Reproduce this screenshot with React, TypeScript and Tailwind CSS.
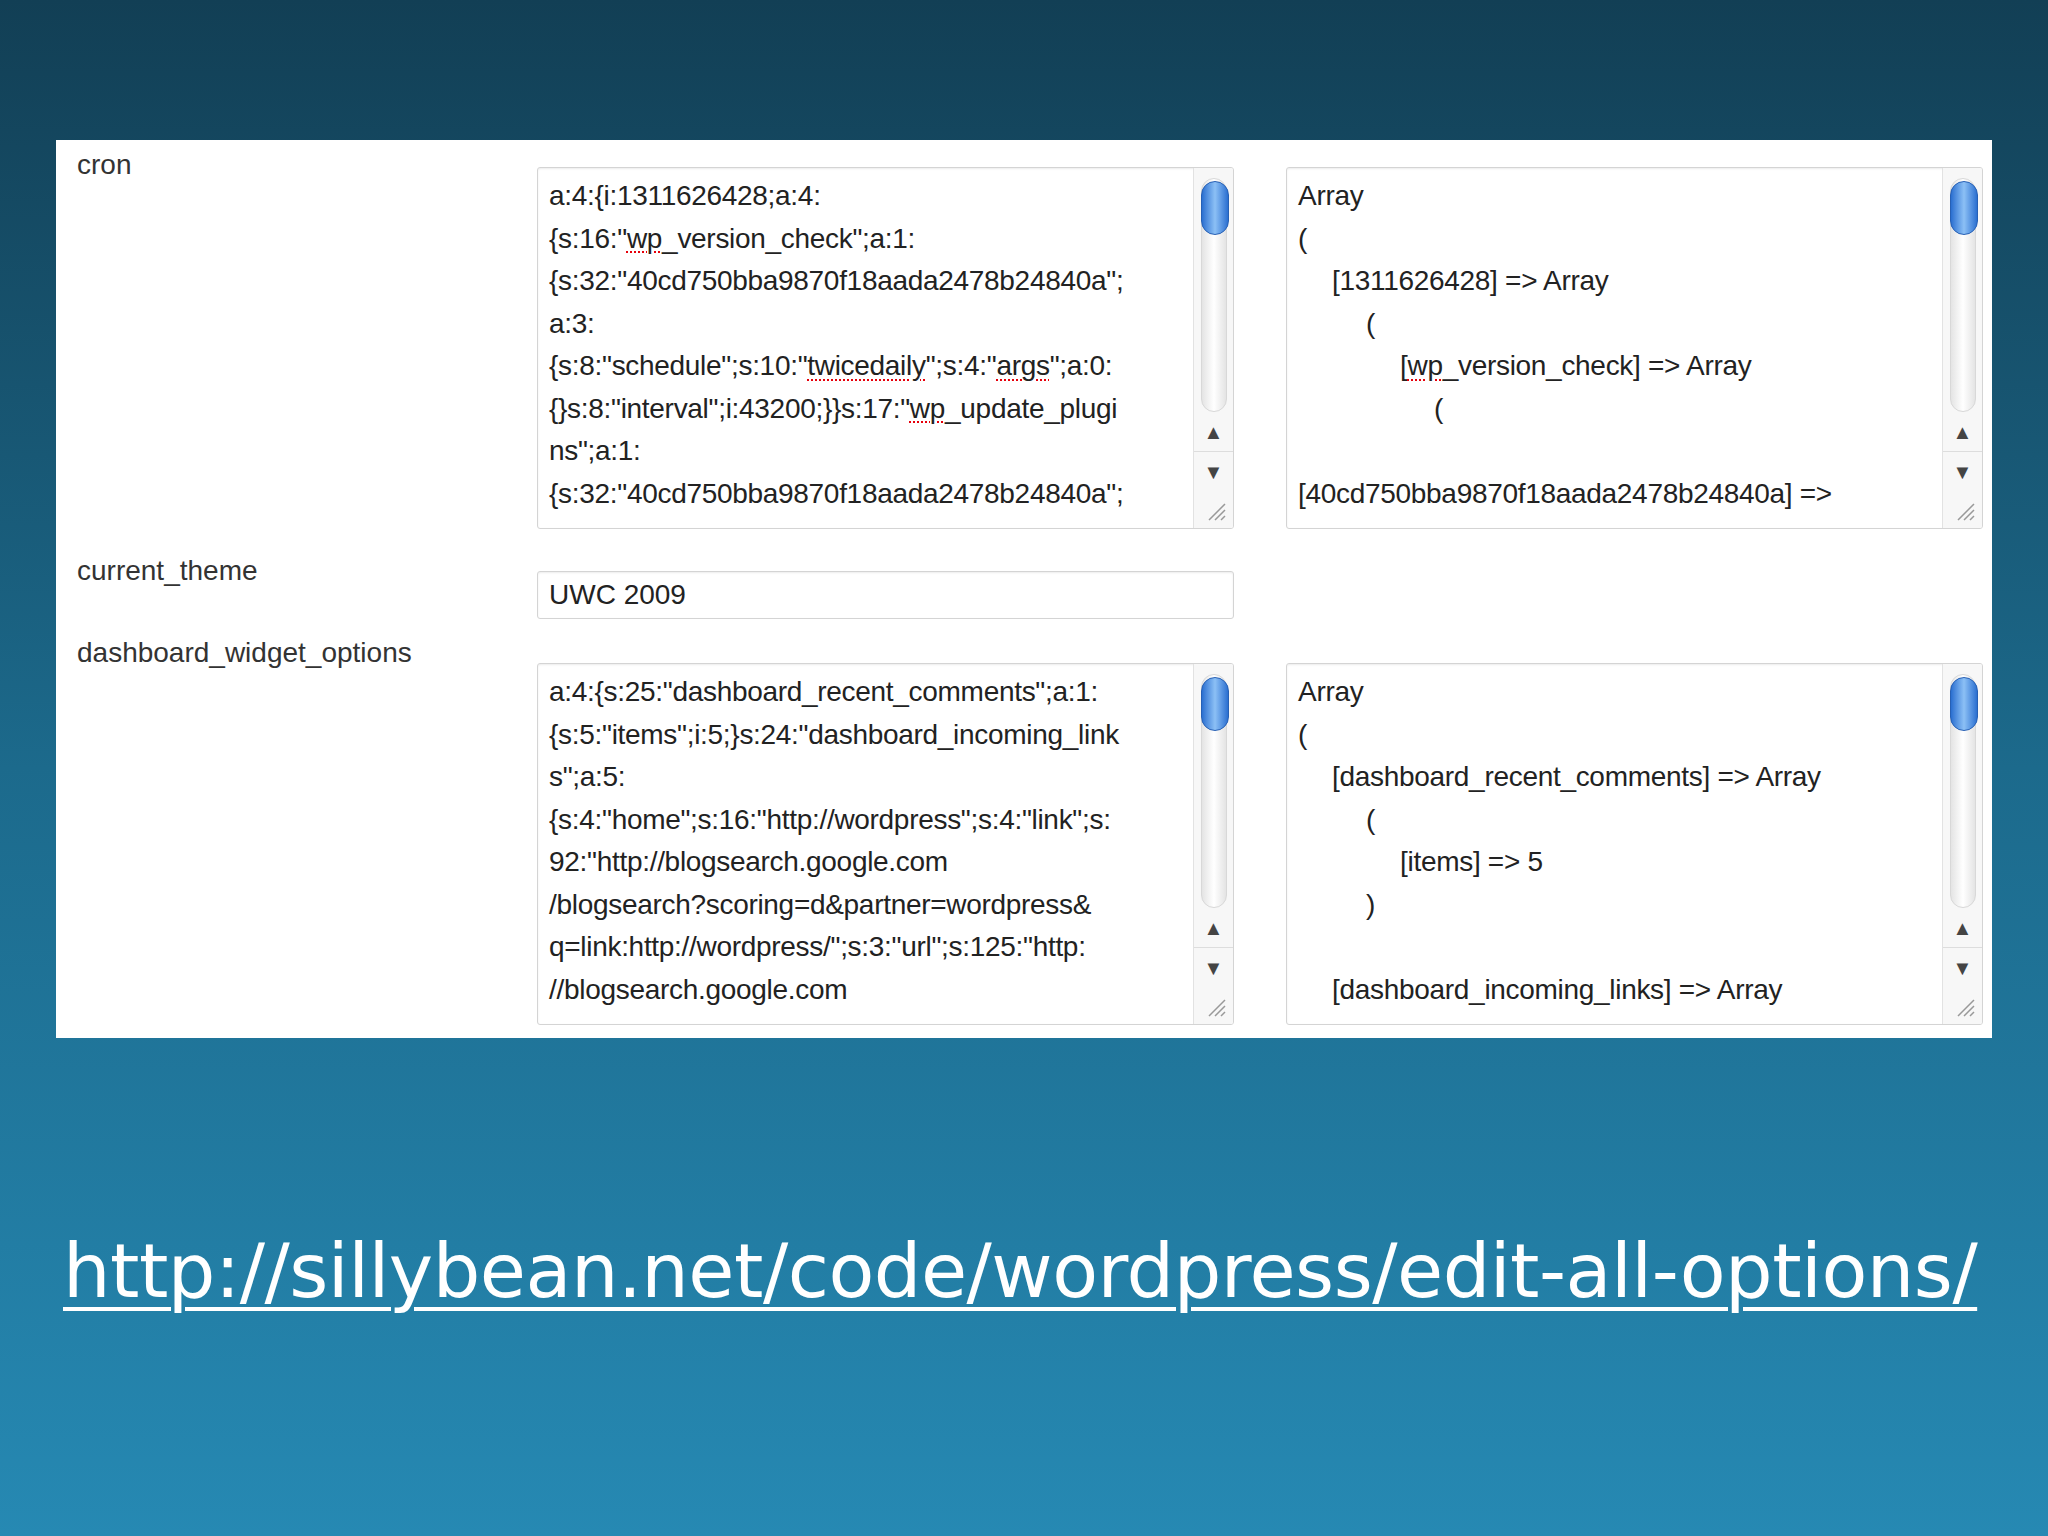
import React from "react";

const S = ({ children }: { children: React.ReactNode }) => (
  <span className="underline decoration-dotted decoration-red-600 decoration-2 underline-offset-4">{children}</span>
);

const Scrollbar = () => (
  <div className="w-[40px] flex flex-col border-l border-[#e2e2e2] bg-[#f7f7f7]">
    <div className="flex-1 flex flex-col items-center pt-[10px] px-[6px]">
      <div className="w-[26px] flex-1 rounded-full bg-gradient-to-r from-[#e4e4e4] via-white to-[#e4e4e4] border border-[#d8d8d8] relative">
        <div className="absolute top-[2px] left-[-1px] w-[28px] h-[54px] rounded-full bg-gradient-to-r from-[#2a6fd0] via-[#8cc0f5] to-[#2a6fd0] border border-[#2660b5]"></div>
      </div>
    </div>
    <div className="h-[40px] flex items-center justify-center text-[#444] text-[20px] border-b border-[#ddd]">▲</div>
    <div className="h-[40px] flex items-center justify-center text-[#444] text-[20px]">▼</div>
    <div className="h-[36px] flex items-end justify-end pr-[6px] pb-[6px]">
      <svg width="22" height="22" viewBox="0 0 22 22"><path d="M4 20 L20 4 M10 20 L20 10 M16 20 L20 16" stroke="#999" strokeWidth="1.5" /></svg>
    </div>
  </div>
);

const Box = ({ children }: { children: React.ReactNode }) => (
  <div className="h-[362px] flex border border-[#d4d4d4] rounded-[3px] bg-white shadow-[inset_0_1px_2px_rgba(0,0,0,0.08)] overflow-hidden">
    <div className="flex-1 pl-[11px] pt-[7px] text-[28px] leading-[42.5px] text-[#222] whitespace-pre overflow-hidden tracking-[-0.3px]">{children}</div>
    <Scrollbar />
  </div>
);

const I = ({ n, children }: { n: number; children: React.ReactNode }) => (
  <div style={{ paddingLeft: n * 34 }}>{children}</div>
);

export default function App() {
  return (
    <div className="w-[2048px] h-[1536px] bg-gradient-to-b from-[#123f55] via-[#1c6a8c] to-[#2689b3] flex flex-col" style={{ fontFamily: '"Liberation Sans", Arial, sans-serif' }}>
      <div className="h-[140px]" />
      <div className="mx-[56px] h-[898px] bg-white grid grid-cols-[408px_697px_697px] gap-x-[52px] pl-[21px] pr-[10px] content-start">
        <div className="pt-[4px] text-[28px] text-[#333]">cron</div>
        <div className="pt-[27px]"><Box>
          <div>a:4:{"{"}i:1311626428;a:4:</div>
          <div>{"{"}s:16:"<S>wp</S>_version_check";a:1:</div>
          <div>{"{"}s:32:"40cd750bba9870f18aada2478b24840a";</div>
          <div>a:3:</div>
          <div>{"{"}s:8:"schedule";s:10:"<S>twicedaily</S>";s:4:"<S>args</S>";a:0:</div>
          <div>{"{}"}s:8:"interval";i:43200;{"}}"}s:17:"<S>wp</S>_update_plugi</div>
          <div>ns";a:1:</div>
          <div>{"{"}s:32:"40cd750bba9870f18aada2478b24840a";</div>
        </Box></div>
        <div className="pt-[27px]"><Box>
          <div>Array</div>
          <div>(</div>
          <I n={1}>[1311626428] =&gt; Array</I>
          <I n={2}>(</I>
          <I n={3}>[<S>wp</S>_version_check] =&gt; Array</I>
          <I n={4}>(</I>
          <div>&nbsp;</div>
          <div>[40cd750bba9870f18aada2478b24840a] =&gt;</div>
        </Box></div>

        <div className="pt-[21px] text-[28px] text-[#333]">current_theme</div>
        <div className="pt-[42px]">
          <div className="h-[48px] border border-[#d4d4d4] rounded-[3px] pl-[11px] flex items-center text-[28px] text-[#222] shadow-[inset_0_1px_2px_rgba(0,0,0,0.08)]">UWC 2009</div>
        </div>
        <div />

        <div className="pt-[13px] text-[28px] text-[#333]">dashboard_widget_options</div>
        <div className="pt-[44px]"><Box>
          <div>a:4:{"{"}s:25:"dashboard_recent_comments";a:1:</div>
          <div>{"{"}s:5:"items";i:5;{"}"}s:24:"dashboard_incoming_link</div>
          <div>s";a:5:</div>
          <div>{"{"}s:4:"home";s:16:"http://wordpress";s:4:"link";s:</div>
          <div>92:"http://blogsearch.google.com</div>
          <div>/blogsearch?scoring=d&amp;partner=wordpress&amp;</div>
          <div>q=link:http://wordpress/";s:3:"url";s:125:"http:</div>
          <div>//blogsearch.google.com</div>
        </Box></div>
        <div className="pt-[44px]"><Box>
          <div>Array</div>
          <div>(</div>
          <I n={1}>[dashboard_recent_comments] =&gt; Array</I>
          <I n={2}>(</I>
          <I n={3}>[items] =&gt; 5</I>
          <I n={2}>)</I>
          <div>&nbsp;</div>
          <I n={1}>[dashboard_incoming_links] =&gt; Array</I>
        </Box></div>
      </div>
      <div className="pt-[196px] pl-[63px]">
        <span className="text-white underline decoration-[4px] underline-offset-[10px] text-[75px] leading-none tracking-[-0.5px]" style={{ fontFamily: '"DejaVu Sans", Verdana, sans-serif' }}>
          http://sillybean.net/code/wordpress/edit-all-options/
        </span>
      </div>
    </div>
  );
}
